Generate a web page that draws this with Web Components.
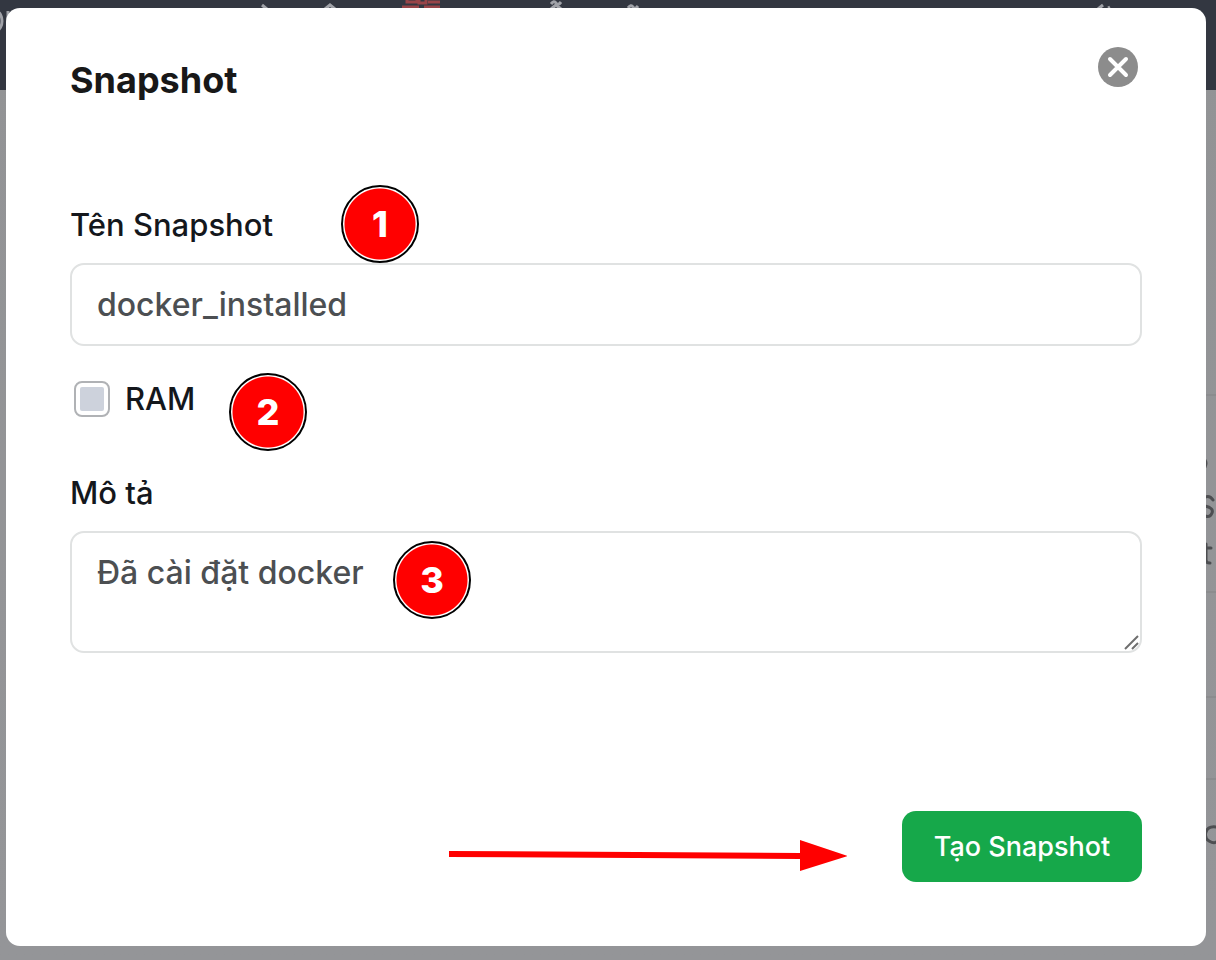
<!DOCTYPE html>
<html lang="vi">
<head>
<meta charset="utf-8">
<meta name="viewport" content="width=device-width, initial-scale=1">
<title>Snapshot</title>
<style>
  body { margin: 0; min-height: 100vh; font-family: Inter, "Open Sans", sans-serif; font-weight: 500; color: #14171c; background: #949598; }
</style>
</head>
<body>
<page-backdrop></page-backdrop>
<modal-dialog heading="Snapshot">
  <snapshot-form></snapshot-form>
</modal-dialog>

<script>
const define = (name, html, setup) => customElements.define(name, class extends HTMLElement {
  connectedCallback() {
    if (this.shadowRoot) return;
    const template = document.createElement('template');
    template.innerHTML = html;
    this.attachShadow({ mode: 'open' }).append(template.content.cloneNode(true));
    if (setup) setup(this, this.shadowRoot);
  }
});

/* Dimmed page that lies under the dialog: dark bar, table rows, clipped letters */
define('page-backdrop', `
  <style>
    :host { display: block; position: fixed; inset: 0; z-index: -1; overflow: hidden; background: linear-gradient(#929395, #949598); }
    header { height: 90px; background: #333741; }
    svg { display: block; }
    .edge { position: absolute; top: 0; right: 0; }
    .edge path { fill: none; stroke: #4d4e51; stroke-width: 3; stroke-linecap: round; }
    .edge .rule { stroke: #8b8c8e; stroke-width: 2; }
  </style>
  <header aria-hidden="true">
    <svg width="1216" height="40" fill="none" stroke="#a0a2a8" stroke-width="3">
      <ellipse cx="-3" cy="21" rx="5" ry="9"/>
      <path d="M8 11v22"/>
      <path d="M262 5l6 5M325 9l5-4 5 4M551 4q3-4 5-1t5-1M551 9l5-4 5 4M628 8q3-4 5-1t5-1M1098 9l5-4M1108 8l2-1"/>
      <path d="M407 0v2h10V0M419 0v3h7V0M428 2h12M402 7h17M424 7h16" stroke="#984448"/>
    </svg>
  </header>
  <svg class="edge" width="12" height="960" aria-hidden="true">
    <path class="rule" d="M2 395h10M2 592h10M2 697h10M2 779h10"/>
    <path d="M1 460q2 3 0 7M9 500Q6 495 1 497M1 506Q10 508 8 513T1 516M2 544v16q0 3 4 3M0 548h7M12 827Q4 826 2 832T5 841T12 842"/>
  </svg>
`);

define('modal-dialog', `
  <style>
    :host { display: block; padding: 8px 10px 14px 6px; }
    section { background: #fff; border-radius: 14px; padding: 39px 64px 64px; }
    header { display: flex; justify-content: space-between; align-items: flex-start; padding-right: 4px; }
    h2 { margin: 0; padding-top: 8px; font-size: 36px; line-height: 50px; font-weight: 700; color: #181818; }
    button { width: 40px; height: 40px; padding: 0; border: 0; border-radius: 50%; background: #8c8c8c; cursor: pointer; }
    svg { display: block; width: 40px; height: 40px; }
  </style>
  <section role="dialog" aria-modal="true" aria-labelledby="title">
    <header>
      <h2 id="title"></h2>
      <button type="button" aria-label="Đóng"><svg viewBox="0 0 40 40" stroke="#fff" stroke-width="4" stroke-linecap="round"><path d="M12 12l16 16M28 12L12 28"/></svg></button>
    </header>
    <slot></slot>
  </section>
`, (host, root) => { root.querySelector('h2').textContent = host.getAttribute('heading'); });

define('step-badge', `
  <style>
    :host { display: grid; place-items: center; box-sizing: border-box; position: absolute; width: 78px; height: 78px;
      border: 2px solid #000; border-radius: 50%; background: radial-gradient(circle, #f00 35px, #fff 36px);
      font: 800 36px/40px Inter, sans-serif; color: #fff; pointer-events: none; }
  </style>
  <slot></slot>
`);

define('arrow-pointer', `
  <style>
    :host { display: block; width: 398px; height: 32px; }
    svg { display: block; }
  </style>
  <svg width="398" height="32" fill="#f00" aria-hidden="true"><path d="M0 11L351 13V0l48 16-48 15V19L0 17z"/></svg>
`);

define('text-field', `
  <style>
    :host { display: block; position: relative; }
    label { display: block; width: fit-content; font-size: 31px; line-height: 44px; margin-bottom: 16px; }
    .box { position: relative; }
    input, textarea { display: block; box-sizing: border-box; width: 100%; margin: 0; border: 2px solid #e0e2e2; border-radius: 14px;
      background: #fff; font: inherit; font-size: 32px; line-height: 40px; color: #4c4f52; outline: none; resize: none; }
    input { height: 83px; padding: 0 25px; }
    textarea { height: 122px; padding: 20px 25px; overflow: hidden; }
    svg { position: absolute; right: 2px; bottom: 2px; }
  </style>
  <label for="control"></label>
  <div class="box"></div>
  <slot></slot>
`, (host, root) => {
  const multiline = host.hasAttribute('multiline');
  const control = document.createElement(multiline ? 'textarea' : 'input');
  control.id = 'control';
  control.value = host.getAttribute('value');
  root.querySelector('label').textContent = host.getAttribute('label');
  const box = root.querySelector('.box');
  box.append(control);
  if (multiline) box.insertAdjacentHTML('beforeend', '<svg width="16" height="16" stroke="#6f6f6f" stroke-width="2" aria-hidden="true"><path d="M1 14L14 1M8 14l6-6"/></svg>');
});

define('check-field', `
  <style>
    :host { display: block; position: relative; }
    label { display: flex; width: fit-content; align-items: center; gap: 15px; padding-left: 4px; font-size: 31px; line-height: 42px; }
    input { appearance: none; box-sizing: border-box; width: 36px; height: 36px; margin: 0; padding: 4px; border: 2px solid #b0b2b5;
      border-radius: 8px; background: #cdd2dc content-box; }
  </style>
  <label><input type="checkbox"><span></span></label>
  <slot></slot>
`, (host, root) => { root.querySelector('span').textContent = host.getAttribute('label'); });

define('snapshot-form', `
  <style>
    :host { display: block; padding-top: 98px; }
    form { display: grid; }
    check-field { margin: 32px 0 51px; }
    .name { left: 271px; top: -18px; }
    .ram { left: 159px; top: -5px; }
    .note { left: 323px; top: 70px; }
    footer { display: flex; justify-content: flex-end; align-items: flex-end; gap: 55px; padding-top: 158px; }
    arrow-pointer { margin-bottom: 10px; }
    button { width: 240px; height: 71px; padding: 0; border: 0; border-radius: 14px; background: #16a84a; color: #fff;
      font: inherit; font-size: 27px; line-height: 40px; }
  </style>
  <form>
    <text-field label="Tên Snapshot" value="docker_installed"><step-badge class="name">1</step-badge></text-field>
    <check-field label="RAM"><step-badge class="ram">2</step-badge></check-field>
    <text-field label="Mô tả" value="Đã cài đặt docker" multiline><step-badge class="note">3</step-badge></text-field>
    <footer>
      <arrow-pointer></arrow-pointer>
      <button type="button">Tạo Snapshot</button>
    </footer>
  </form>
`);
</script>
</body>
</html>
